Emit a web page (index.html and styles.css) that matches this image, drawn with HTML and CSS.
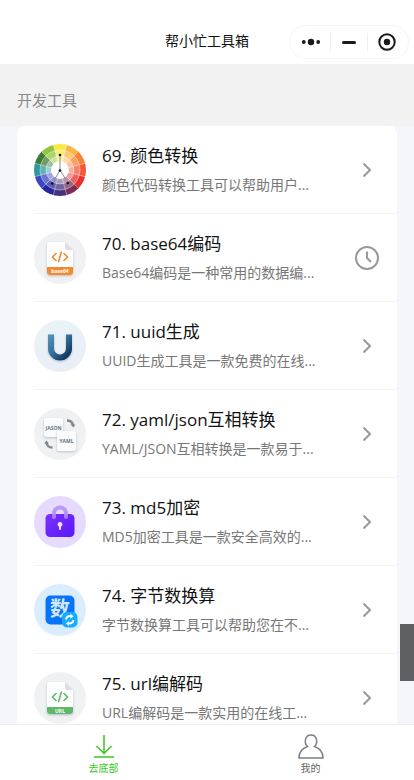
FILE: index.html
```html
<!DOCTYPE html>
<html lang="zh-CN">
<head>
    <meta charset="UTF-8">
    <meta name="viewport" content="width=device-width, initial-scale=1.0">
    <title>帮小忙工具箱</title>
    <link rel="stylesheet" href="styles.css">
</head>
<body>

    <!-- Navigation bar -->
    <header class="navbar">
        <h1 class="navbar-title">帮小忙工具箱</h1>
        <div class="capsule">
            <button type="button" aria-label="更多">
                <svg width="20" height="20" viewBox="0 0 20 20" fill="#1a1a1a"><circle cx="2.8" cy="10" r="1.9"/><circle cx="10" cy="10" r="3.2"/><circle cx="17.2" cy="10" r="1.9"/></svg>
            </button>
            <button type="button" aria-label="最小化">
                <svg width="20" height="20" viewBox="0 0 20 20"><path d="M4.500 10.500h11" stroke="#1a1a1a" stroke-width="3" stroke-linecap="round"/></svg>
            </button>
            <button type="button" aria-label="关闭">
                <svg width="20" height="20" viewBox="0 0 20 20"><circle cx="10" cy="10" r="7.700" fill="none" stroke="#1a1a1a" stroke-width="2"/><circle cx="10" cy="10" r="3.200" fill="#1a1a1a"/></svg>
            </button>
        </div>
    </header>

    <h2 class="section-title">开发工具</h2>

    <!-- Tool list -->
    <main class="content">
        <ul class="tool-list">
            <li>
                <a class="tool" href="#color">
                    <span class="avatar wheel">
                        <svg viewBox="0 0 52 52">
                            <circle cx="26" cy="26" r="20" fill="#fff" fill-opacity=".25"/>
                            <circle cx="26" cy="26" r="14" fill="#fff" fill-opacity=".35"/>
                            <g fill="none" stroke="#fff" stroke-opacity=".6" stroke-width=".7">
                                <circle cx="26" cy="26" r="20"/>
                                <circle cx="26" cy="26" r="14"/>
                                <path d="M19.300 .9l13.400 50.200M32.700 .9L19.300 51.100M7.600 7.600l36.800 36.800M44.400 7.600L7.600 44.400M.9 19.300l50.200 13.400M.9 32.700l50.200-13.400"/>
                            </g>
                            <circle cx="26" cy="26" r="9" fill="#fff"/>
                            <path d="M26 26V11M26 26l-8 14M26 26l8 13" stroke="#8a8a8a" stroke-width="1"/>
                            <g fill="#111"><circle cx="26" cy="11" r="1.300"/><circle cx="26" cy="26.500" r="1.300"/><circle cx="18.200" cy="39.500" r="1.300"/><circle cx="33.800" cy="39" r="1.300"/></g>
                        </svg>
                    </span>
                    <span class="tool-text">
                        <span class="tool-name">69. 颜色转换</span>
                        <span class="tool-desc">颜色代码转换工具可以帮助用户...</span>
                    </span>
                    <svg class="arrow" viewBox="0 0 26 26"><path d="M9.500 6.500l6.500 6.500-6.500 6.500"/></svg>
                </a>
            </li>
            <li>
                <a class="tool" href="#base64">
                    <span class="avatar gray">
                        <svg viewBox="0 0 52 52">
                            <path class="shadow" d="M15 10h16l8 8v22a3 3 0 0 1-3 3H16a3 3 0 0 1-3-3V12a2 2 0 0 1 2-2z" fill="#fff"/>
                            <path d="M31 10l8 8h-6a2 2 0 0 1-2-2z" fill="#dcdee2"/>
                            <path d="M13 35h26v5a3 3 0 0 1-3 3H16a3 3 0 0 1-3-3z" fill="#f28b30"/>
                            <path d="M22.500 21l-4 4 4 4M29.500 21l4 4-4 4M27.500 19.500l-3 10.500" fill="none" stroke="#f28b30" stroke-width="1.600"/>
                            <text x="26" y="41" font-size="5" font-weight="700" fill="#fff" text-anchor="middle">base64</text>
                        </svg>
                    </span>
                    <span class="tool-text">
                        <span class="tool-name">70. base64编码</span>
                        <span class="tool-desc">Base64编码是一种常用的数据编...</span>
                    </span>
                    <svg class="arrow" viewBox="0 0 26 26"><circle cx="13" cy="13" r="11"/><path d="M13 6.500v6.500l4 4"/></svg>
                </a>
            </li>
            <li>
                <a class="tool" href="#uuid">
                    <span class="avatar ice">
                        <svg viewBox="0 0 52 52">
                            <defs><linearGradient id="u" x1="0" y1="0" x2="1" y2="1"><stop offset="0" stop-color="#5a95b8"/><stop offset=".45" stop-color="#356f9b"/><stop offset=".8" stop-color="#143a66"/><stop offset="1" stop-color="#285781"/></linearGradient></defs>
                            <path class="shadow" d="M14 14.500h6v14a6 6 0 0 0 12 0v-14h6v14a12 12 0 0 1-24 0z" fill="url(#u)"/>
                        </svg>
                    </span>
                    <span class="tool-text">
                        <span class="tool-name">71. uuid生成</span>
                        <span class="tool-desc">UUID生成工具是一款免费的在线...</span>
                    </span>
                    <svg class="arrow" viewBox="0 0 26 26"><path d="M9.500 6.500l6.500 6.500-6.500 6.500"/></svg>
                </a>
            </li>
            <li>
                <a class="tool" href="#yaml">
                    <span class="avatar gray">
                        <svg viewBox="0 0 52 52">
                            <rect class="shadow" x="10" y="10" width="19" height="19" rx="2" fill="#fafbfc"/>
                            <rect class="shadow" x="23" y="23" width="19" height="20" rx="2" fill="#fafbfc"/>
                            <g font-size="5" font-weight="700" fill="#687381" text-anchor="middle"><text x="19.500" y="21.500">JASON</text><text x="32.500" y="34.500">YAML</text></g>
                            <path d="M33 12.500q5.500 0 6 5M18.500 39.500q-5.500 0-6-5" fill="none" stroke="#7d8992" stroke-width="2.400"/>
                            <path d="M36.500 16.500h5l-2 3zM10 35.500l2.500-3 2.500 3z" fill="#7d8992"/>
                        </svg>
                    </span>
                    <span class="tool-text">
                        <span class="tool-name">72. yaml/json互相转换</span>
                        <span class="tool-desc">YAML/JSON互相转换是一款易于...</span>
                    </span>
                    <svg class="arrow" viewBox="0 0 26 26"><path d="M9.500 6.500l6.500 6.500-6.500 6.500"/></svg>
                </a>
            </li>
            <li>
                <a class="tool" href="#md5">
                    <span class="avatar violet">
                        <svg viewBox="0 0 52 52">
                            <defs><linearGradient id="lock" x1="0" y1="0" x2="1" y2="1"><stop offset="0" stop-color="#7a32ff"/><stop offset="1" stop-color="#5a18fa"/></linearGradient></defs>
                            <rect x="11.500" y="18" width="29" height="23" rx="4.500" fill="url(#lock)"/>
                            <path d="M20 21v-3.500a6 6 0 0 1 12 0V21" fill="none" stroke="#b18cf8" stroke-opacity=".85" stroke-width="4" stroke-linecap="round"/>
                            <circle cx="26" cy="28.500" r="2.400" fill="#eadfff"/>
                            <path d="M26 29v4" stroke="#eadfff" stroke-width="2" stroke-linecap="round"/>
                        </svg>
                    </span>
                    <span class="tool-text">
                        <span class="tool-name">73. md5加密</span>
                        <span class="tool-desc">MD5加密工具是一款安全高效的...</span>
                    </span>
                    <svg class="arrow" viewBox="0 0 26 26"><path d="M9.500 6.500l6.500 6.500-6.500 6.500"/></svg>
                </a>
            </li>
            <li>
                <a class="tool" href="#byte">
                    <span class="avatar sky">
                        <svg viewBox="0 0 52 52">
                            <rect x="11.500" y="11.500" width="29" height="29" rx="5" fill="#0873f8"/>
                            <text x="26" y="32" font-size="20" font-weight="700" fill="#d3e8ff" text-anchor="middle">数</text>
                            <rect x="28" y="28" width="15.500" height="15.500" rx="5" fill="#12adff"/>
                            <path d="M32 35.500q.7-3.800 5-3.500M39.500 36q-.7 3.800-5 3.500" fill="none" stroke="#fff" stroke-width="1.900"/>
                            <path d="M36.500 29.800l3 2.500-3 2.500zM35 37l-3 2.500 3 2.500z" fill="#fff"/>
                        </svg>
                    </span>
                    <span class="tool-text">
                        <span class="tool-name">74. 字节数换算</span>
                        <span class="tool-desc">字节数换算工具可以帮助您在不...</span>
                    </span>
                    <svg class="arrow" viewBox="0 0 26 26"><path d="M9.500 6.500l6.500 6.500-6.500 6.500"/></svg>
                </a>
            </li>
            <li>
                <a class="tool" href="#url">
                    <span class="avatar gray">
                        <svg viewBox="0 0 52 52">
                            <path class="shadow" d="M15 10h16l8 8v21a3 3 0 0 1-3 3H16a3 3 0 0 1-3-3V12a2 2 0 0 1 2-2z" fill="#fff"/>
                            <path d="M31 10l8 8h-6a2 2 0 0 1-2-2z" fill="#dcdee2"/>
                            <path d="M13 35h26v4a3 3 0 0 1-3 3H16a3 3 0 0 1-3-3z" fill="#5fb76a"/>
                            <path d="M22.500 21l-4 4 4 4M29.500 21l4 4-4 4M27.500 19.500l-3 10.500" fill="none" stroke="#5fb76a" stroke-width="1.600"/>
                            <text x="26" y="40.500" font-size="5" font-weight="700" fill="#fff" text-anchor="middle">URL</text>
                        </svg>
                    </span>
                    <span class="tool-text">
                        <span class="tool-name">75. url编解码</span>
                        <span class="tool-desc">URL编解码是一款实用的在线工...</span>
                    </span>
                    <svg class="arrow" viewBox="0 0 26 26"><path d="M9.500 6.500l6.500 6.500-6.500 6.500"/></svg>
                </a>
            </li>
        </ul>
        <div class="scroll-thumb"></div>
    </main>

    <!-- Bottom tabs -->
    <nav class="tabbar">
        <a class="tab active" href="#bottom">
            <svg viewBox="0 0 28 28"><path d="M14 3v19M6.500 14l7.500 7.500 7.500-7.500M4 25h20"/></svg>
            去底部
        </a>
        <a class="tab" href="#mine">
            <svg viewBox="0 0 28 28"><path d="M10.500 14.500C7 11.500 7.500 3 14 3s7 8.500 3.500 11.500C22 16 26 20 26 26H2c0-6 4-10 8.500-11.500z"/></svg>
            我的
        </a>
    </nav>

</body>
</html>
```

FILE: styles.css
```css
* {
    box-sizing: border-box;
    margin: 0;
    padding: 0;
}
body {
    display: flex;
    flex-direction: column;
    height: 100vh;
    background-color: #f5f6fb;
    font-family: "Open Sans", "Noto Sans CJK SC", sans-serif;
    color: #111;
}
a {
    color: inherit;
    text-decoration: none;
}
/* Navigation bar */
.navbar {
    display: grid;
    grid-template-columns: 1fr auto 1fr;
    align-items: center;
    height: 64px;
    padding: 20px 5px 0;
    background-color: #fff;
}
.navbar-title {
    grid-column: 2;
    padding-bottom: 2px;
    font-size: 14px;
    font-weight: 400;
    line-height: 20px;
}
.capsule {
    display: flex;
    justify-self: end;
    align-items: center;
    width: 120px;
    height: 34px;
    padding: 0 3px;
    border: 1px solid #f5f5f5;
    border-radius: 17px;
}
.capsule button {
    display: flex;
    flex: 1;
    justify-content: center;
    align-items: center;
    height: 18px;
    border: none;
    background: none;
    cursor: pointer;
}
.capsule button + button {
    border-left: 1px solid #f0f0f0;
}
.section-title {
    padding: 24px 17px 14px;
    background-color: #f2f2f2;
    color: #888;
    font-size: 15px;
    font-weight: 400;
    line-height: 24px;
}
/* Tool list */
.content {
    position: relative;
    flex: 1;
    min-height: 0;
    padding: 0 17px;
    overflow: hidden;
}
.tool-list {
    border-radius: 8px;
    background-color: #fff;
    list-style: none;
}
.tool-list li {
    padding-left: 17px;
}
.tool {
    display: flex;
    align-items: center;
    height: 88px;
    padding-right: 17px;
    border-bottom: 1px solid #f3f3f5;
}
.avatar {
    flex-shrink: 0;
    width: 52px;
    height: 52px;
    margin-right: 16px;
    border-radius: 50%;
    overflow: hidden;
}
.avatar svg {
    display: block;
}
.wheel {
    background: conic-gradient(from -15deg, #f8e942 30deg, #fcb645 0 60deg, #f98237 0 90deg, #f4573c 0 120deg, #e8302c 0 150deg, #7a2d58 0 180deg, #44307c 0 210deg, #2626a0 0 240deg, #3a48c4 0 270deg, #2f989e 0 300deg, #3e7c35 0 330deg, #90c63c 0);
}
.gray {
    background-color: #eff1f3;
}
.ice {
    background: linear-gradient(160deg, #e9f4f6, #e9edf6);
}
.violet {
    background-color: #e6dbff;
}
.sky {
    background-color: #d9edff;
}
.shadow {
    filter: drop-shadow(0 1px 1px rgba(60, 70, 90, 0.3));
}
.tool-text {
    display: flex;
    flex: 1;
    flex-direction: column;
    gap: 6px;
    min-width: 0;
    padding-bottom: 2px;
    white-space: nowrap;
}
.tool-name {
    font-size: 17px;
    line-height: 26px;
}
.tool-desc {
    color: #777;
    font-size: 14px;
    line-height: 20px;
}
.arrow {
    flex-shrink: 0;
    width: 26px;
    height: 26px;
    fill: none;
    stroke: #999;
    stroke-width: 2;
}
.scroll-thumb {
    position: absolute;
    right: 0;
    bottom: 43px;
    width: 14px;
    height: 57px;
    background-color: #5f6064;
}
/* Bottom tabs */
.tabbar {
    display: flex;
    height: 56px;
    border-top: 1px solid #ececee;
    background-color: #fff;
}
.tab {
    display: flex;
    flex: 1;
    flex-direction: column;
    align-items: center;
    padding-top: 7px;
    color: #666;
    font-size: 10px;
    line-height: 16px;
}
.tab svg {
    width: 28px;
    height: 28px;
    fill: none;
    stroke: #7d7f84;
    stroke-width: 1.5;
}
.active {
    color: #3cc51f;
}
.active svg {
    stroke: #3cc51f;
}
```
